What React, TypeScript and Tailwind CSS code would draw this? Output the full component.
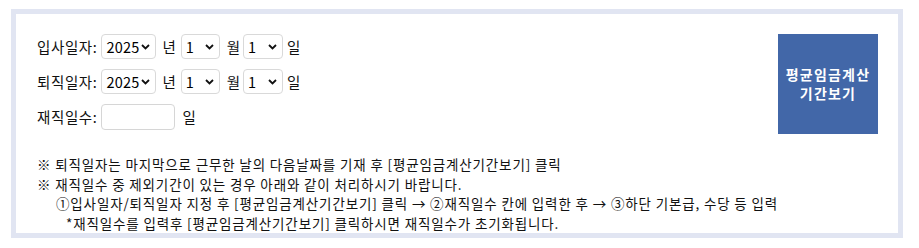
import React from "react";

const FONT = { fontFamily: '"Noto Sans CJK KR", "Noto Sans", sans-serif' };

function Chevron() {
  return (
    <svg
      className="pointer-events-none absolute right-[6px] top-1/2 -translate-y-1/2"
      width="9"
      height="6"
      viewBox="0 0 9 6"
    >
      <path d="M1 1 L4.5 4.5 L8 1" fill="none" stroke="#111" strokeWidth="1.8" />
    </svg>
  );
}

function Sel({ w, value, options }: { w: string; value: string; options: string[] }) {
  return (
    <div className={`relative ${w} h-[25px]`}>
      <select
        defaultValue={value}
        className="h-full w-full appearance-none rounded-[4px] border border-[#d9d9d9] bg-white pl-[4px] text-[14.5px] tracking-[0.2px] text-black outline-none"
        style={FONT}
      >
        {options.map((o) => (
          <option key={o}>{o}</option>
        ))}
      </select>
      <Chevron />
    </div>
  );
}

const years = ["2023", "2024", "2025", "2026"];
const months = Array.from({ length: 12 }, (_, i) => String(i + 1));
const days = Array.from({ length: 31 }, (_, i) => String(i + 1));

function DateRow({ label }: { label: string }) {
  return (
    <div className="flex h-[25px] items-center">
      <span className="mr-[4px] tracking-[0.6px]">{label}</span>
      <Sel w="w-[55px]" value="2025" options={years} />
      <span className="ml-[6px] mr-[5px]">년</span>
      <Sel w="w-[39px]" value="1" options={months} />
      <span className="ml-[7px] mr-[3px]">월</span>
      <Sel w="w-[40px]" value="1" options={days} />
      <span className="ml-[4px]">일</span>
    </div>
  );
}

export default function App() {
  return (
    <div className="bg-white pl-[11px] pt-[9px] text-[#111]" style={FONT}>
      <div className="h-[229px] w-[892px] border-[5px] border-[#e1e5f2] bg-white">
        <div className="flex justify-between pl-[21px] pr-[20px] pt-[20px] text-[14.5px]">
          <div className="flex flex-col gap-[10px]">
            <DateRow label="입사일자:" />
            <DateRow label="퇴직일자:" />
            <div className="flex h-[26px] items-center">
              <span className="mr-[4px] tracking-[0.6px]">재직일수:</span>
              <input
                type="text"
                className="h-[26px] w-[74px] rounded-[4px] border border-[#d6d6d6] bg-white outline-none"
              />
              <span className="ml-[7px]">일</span>
            </div>
          </div>
          <button className="flex h-[100px] w-[100px] flex-col items-center justify-center bg-[#4267a8] text-[14px] font-bold leading-[19px] tracking-[1.2px] text-white">
            <span>평균임금계산</span>
            <span>기간보기</span>
          </button>
        </div>
        <div className="mt-[21px] pl-[21px] text-[13.5px] leading-[19.5px] tracking-[0.85px]">
          <div>※ 퇴직일자는 마지막으로 근무한 날의 다음날짜를 기재 후 [평균임금계산기간보기] 클릭</div>
          <div>※ 재직일수 중 제외기간이 있는 경우 아래와 같이 처리하시기 바랍니다.</div>
          <div className="pl-[19px]">
            ①입사일자/퇴직일자 지정 후 [평균임금계산기간보기] 클릭 → ②재직일수 칸에 입력한 후 → ③하단 기본급, 수당 등 입력
          </div>
          <div className="pl-[29px]">*재직일수를 입력후 [평균임금계산기간보기] 클릭하시면 재직일수가 초기화됩니다.</div>
        </div>
      </div>
    </div>
  );
}
